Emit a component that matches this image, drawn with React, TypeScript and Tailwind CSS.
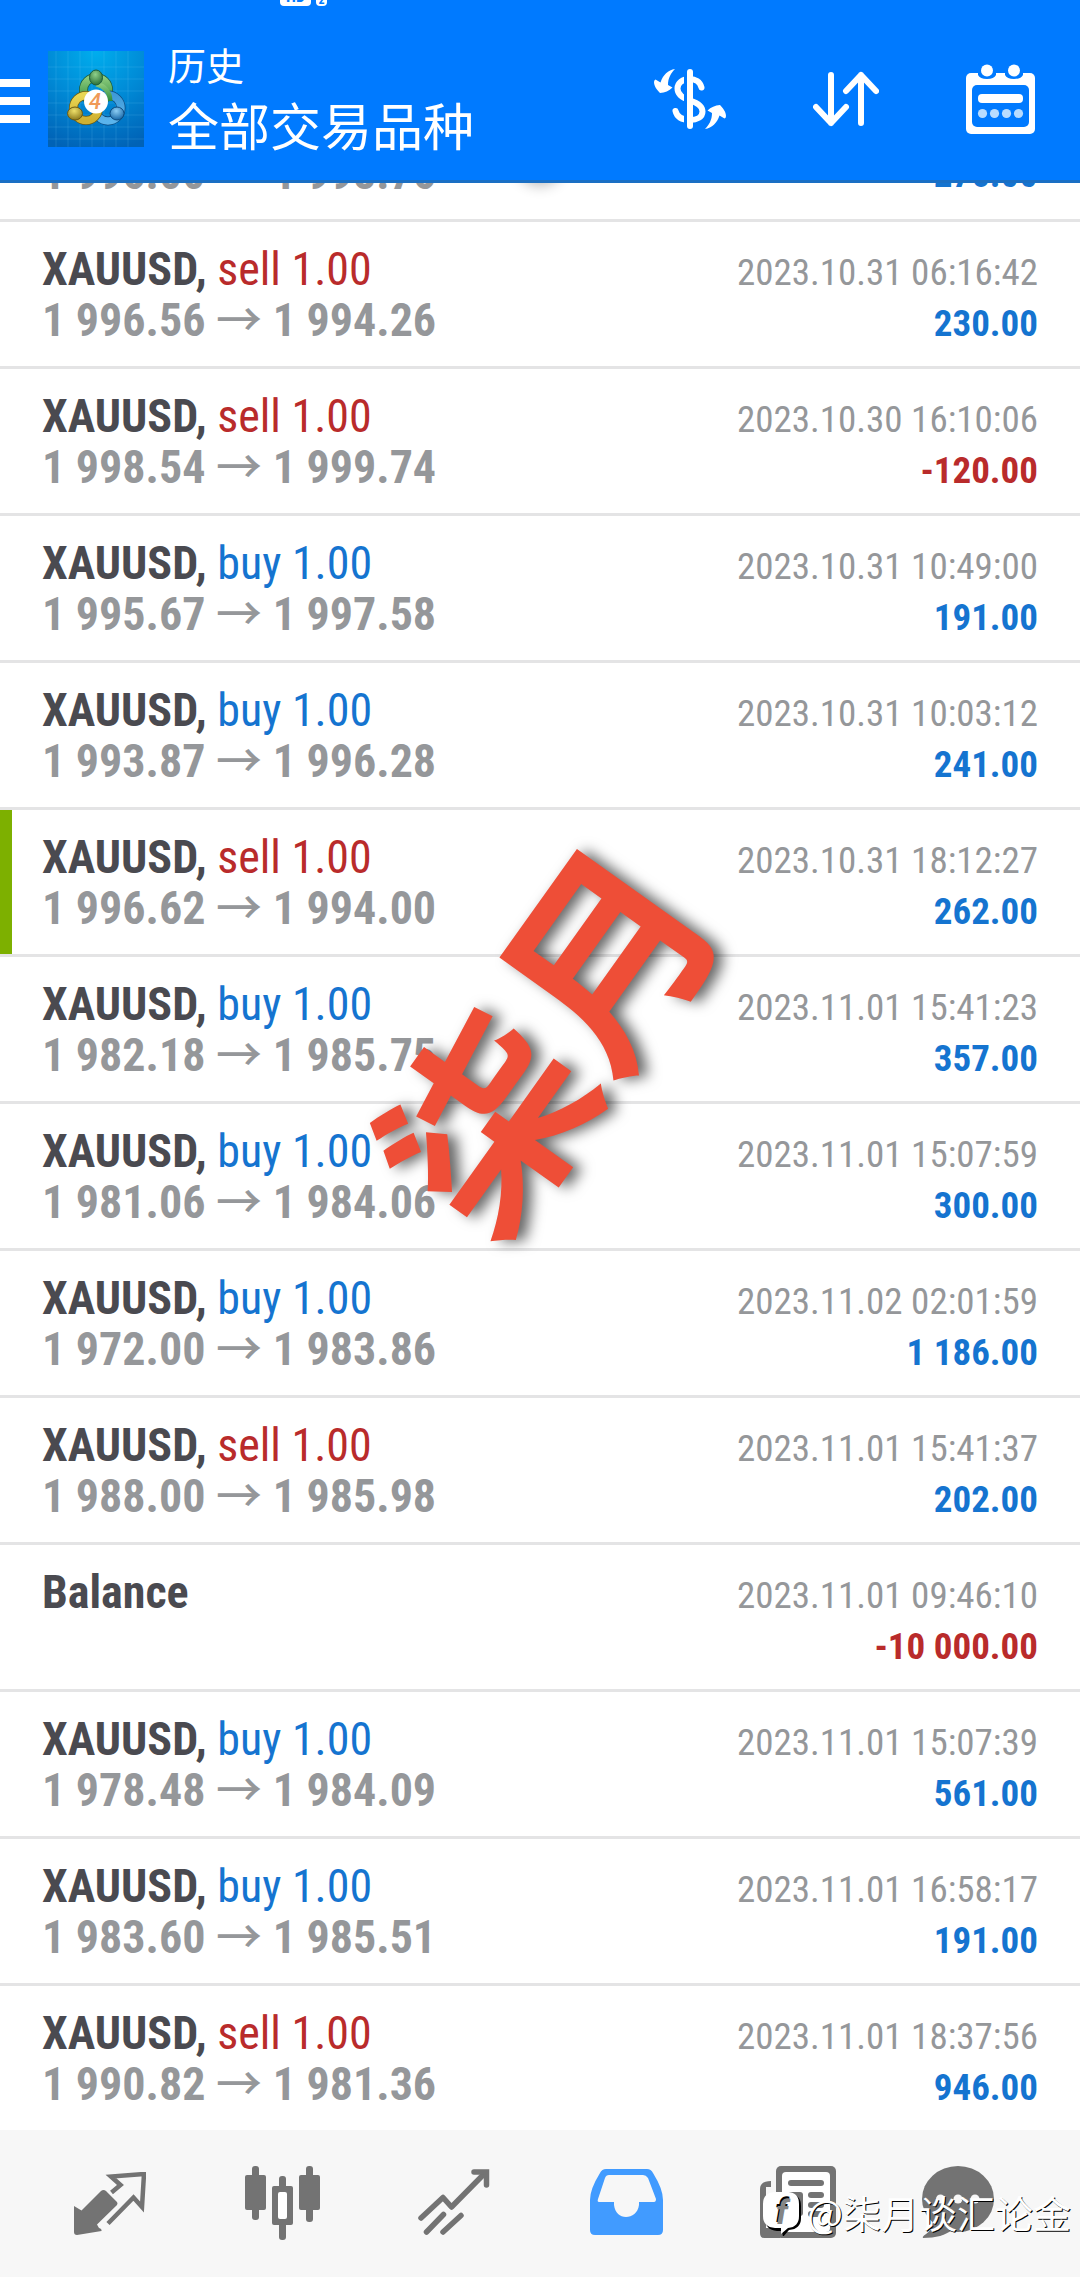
import React from "react";

type Deal = {
  side?: "buy" | "sell";
  open?: string;
  close?: string;
  time: string;
  profit: string;
  marked?: boolean;
};

const deals: Deal[] = [
  { side: "sell", open: "1 996.56", close: "1 994.26", time: "2023.10.31 06:16:42", profit: "230.00" },
  { side: "sell", open: "1 998.54", close: "1 999.74", time: "2023.10.30 16:10:06", profit: "-120.00" },
  { side: "buy", open: "1 995.67", close: "1 997.58", time: "2023.10.31 10:49:00", profit: "191.00" },
  { side: "buy", open: "1 993.87", close: "1 996.28", time: "2023.10.31 10:03:12", profit: "241.00" },
  { side: "sell", open: "1 996.62", close: "1 994.00", time: "2023.10.31 18:12:27", profit: "262.00", marked: true },
  { side: "buy", open: "1 982.18", close: "1 985.75", time: "2023.11.01 15:41:23", profit: "357.00" },
  { side: "buy", open: "1 981.06", close: "1 984.06", time: "2023.11.01 15:07:59", profit: "300.00" },
  { side: "buy", open: "1 972.00", close: "1 983.86", time: "2023.11.02 02:01:59", profit: "1 186.00" },
  { side: "sell", open: "1 988.00", close: "1 985.98", time: "2023.11.01 15:41:37", profit: "202.00" },
  { time: "2023.11.01 09:46:10", profit: "-10 000.00" },
  { side: "buy", open: "1 978.48", close: "1 984.09", time: "2023.11.01 15:07:39", profit: "561.00" },
  { side: "buy", open: "1 983.60", close: "1 985.51", time: "2023.11.01 16:58:17", profit: "191.00" },
  { side: "sell", open: "1 990.82", close: "1 981.36", time: "2023.11.01 18:37:56", profit: "946.00" },
];

function AppLogo() {
  return (
    <svg className="h-24 w-24 shrink-0" viewBox="0 0 96 96" aria-hidden="true">
      <defs>
        <radialGradient id="bg" cx="0.5" cy="0" r="1.05">
          <stop offset="0" stopColor="#00aeee" />
          <stop offset="0.5" stopColor="#008ad6" />
          <stop offset="1" stopColor="#0062b6" />
        </radialGradient>
        <linearGradient id="green" x1="0" y1="0" x2="0" y2="1">
          <stop offset="0" stopColor="#8ccb7c" />
          <stop offset="1" stopColor="#2c8a3c" />
        </linearGradient>
        <linearGradient id="yellow" x1="0" y1="0" x2="0" y2="1">
          <stop offset="0" stopColor="#e8d654" />
          <stop offset="1" stopColor="#d0b030" />
        </linearGradient>
        <linearGradient id="sky" x1="0" y1="0" x2="0" y2="1">
          <stop offset="0" stopColor="#3f9ad8" />
          <stop offset="1" stopColor="#5ab4ec" />
        </linearGradient>
        <radialGradient id="greenHead" cx="0.45" cy="0.3" r="0.7">
          <stop offset="0" stopColor="#8fd08a" />
          <stop offset="1" stopColor="#2b7038" />
        </radialGradient>
        <radialGradient id="yellowHead" cx="0.45" cy="0.3" r="0.7">
          <stop offset="0" stopColor="#eee06a" />
          <stop offset="1" stopColor="#8c7a1c" />
        </radialGradient>
        <radialGradient id="skyHead" cx="0.45" cy="0.3" r="0.7">
          <stop offset="0" stopColor="#8ccdf4" />
          <stop offset="1" stopColor="#1868a8" />
        </radialGradient>
      </defs>
      <rect width="96" height="96" fill="url(#bg)" />
      <path
        d="M8 0V96M20 0V96M32 0V96M44 0V96M56 0V96M68 0V96M80 0V96M0 16H96M0 28H96M0 40H96M0 52H96M0 64H96M0 76H96M0 88H96"
        stroke="#7fd4ff"
        strokeOpacity="0.16"
      />
      <circle cx="48" cy="39" r="12.500" fill="none" stroke="#1c5b3a" strokeWidth="9" />
      <circle cx="48" cy="39" r="12.500" fill="none" stroke="url(#green)" strokeWidth="7.500" />
      <circle cx="60" cy="57" r="13" fill="none" stroke="#0d4b80" strokeWidth="9" />
      <circle cx="60" cy="57" r="13" fill="none" stroke="url(#sky)" strokeWidth="7.500" />
      <circle cx="38" cy="57" r="12.500" fill="none" stroke="#6a5a14" strokeWidth="9" />
      <circle cx="38" cy="57" r="12.500" fill="none" stroke="url(#yellow)" strokeWidth="7.500" />
      <path d="M48 33C55 34 62 40 62 50" fill="none" stroke="url(#green)" strokeWidth="5" />
      <ellipse cx="48" cy="26.500" rx="6.500" ry="7.500" fill="url(#greenHead)" stroke="#1c5b3a" />
      <ellipse cx="27" cy="62.500" rx="7.500" ry="6.500" fill="url(#yellowHead)" stroke="#6a5a14" />
      <ellipse cx="69" cy="62.500" rx="7" ry="6.500" fill="url(#skyHead)" stroke="#0d4b80" />
      <circle cx="48" cy="50.500" r="12" fill="#fff" />
      <text x="47" y="58" textAnchor="middle" fontSize="22" fontWeight="500" fontStyle="italic" fill="#f09a58" fontFamily="Roboto, sans-serif">
        4
      </text>
    </svg>
  );
}

function Header() {
  return (
    <header className="relative z-10 h-[183px] shrink-0 border-b-3 border-[#1a6fc4] bg-[#007aff] text-white">
      {/* Status bar, mostly scrolled off */}
      <div className="flex h-[6px] items-end gap-[5px] overflow-hidden pl-[280px]" aria-hidden="true">
        <span className="flex h-[18px] w-[31px] shrink-0 items-end justify-center rounded-sm bg-white text-base leading-[18px] font-bold text-[#007aff]">HD</span>
        <span className="flex h-[18px] w-[11px] shrink-0 items-end justify-center rounded-sm bg-white text-xs leading-[12px] font-bold text-[#007aff]">2</span>
      </div>
      <div className="flex items-center pt-[30px] pr-11">
        <button type="button" aria-label="菜单" className="flex h-24 w-12 flex-col justify-center gap-[10px] pt-1">
          <span className="h-2 w-[30px] bg-white" />
          <span className="h-2 w-[30px] bg-white" />
          <span className="h-2 w-[30px] bg-white" />
        </button>
        <div className="mt-[15px] mb-auto">
          <AppLogo />
        </div>
        <div className="ml-6 flex-1 pb-[6px] font-['Noto_Sans_CJK_SC',sans-serif]">
          <p className="text-[38px] leading-[56px]">历史</p>
          <h1 className="text-[51px] leading-[64px]">全部交易品种</h1>
        </div>
        <button type="button" aria-label="货币">
          <svg className="h-[62px] w-[72px]" viewBox="0 0 72 62" fill="none">
            <path
              d="M47.500 19.500C46 13.500 41 11 36 11C28.500 11 23.500 15 23.500 20.500C23.500 27 28.500 30 36 32.500C44 35 48.500 38 48.500 43.500C48.500 49 43 52 36 52C28 52 23 49 21.500 43"
              stroke="#fff"
              strokeWidth="6"
              strokeLinecap="round"
            />
            <path d="M31.500 4V58" stroke="#007aff" strokeWidth="3" />
            <path d="M36 4V58" stroke="#fff" strokeWidth="6" strokeLinecap="round" />
            <path d="M21 1C14 2 9 7 6.500 14.500L1.500 11.500Q0 12 0 14C0 18 3 22 6 25C11 24.500 15 23 18.500 19.500L14 17C14 10 17 5 21 1Z" fill="#fff" />
            <path d="M51 61C58 60 63 55 65.500 47.500L70.500 50.500Q72 50 72 48C72 44 69 40 66 37C61 37.500 57 39 53.500 42.500L58 45C58 52 55 57 51 61Z" fill="#fff" />
          </svg>
        </button>
        <button type="button" aria-label="排序" className="ml-[87px]">
          <svg className="h-14 w-[66px]" viewBox="0 0 66 56" fill="none" stroke="#fff" strokeWidth="6" strokeLinecap="round" strokeLinejoin="round">
            <path d="M18 4V52M3 36L18 52L33 36M48 52V4M33 20L48 4L63 20" />
          </svg>
        </button>
        <button type="button" aria-label="日期" className="ml-[87px]">
          <svg className="h-[70px] w-[70px]" viewBox="0 0 70 70">
            <rect y="9" width="69" height="61" rx="5" fill="#fff" />
            <rect x="6" y="21" width="57" height="42" rx="5" fill="#007aff" />
            <path d="M12 9V11Q14 15 21 15Q28 15 30 11V9ZM39 9V11Q41 15 48 15Q55 15 57 11V9Z" fill="#007aff" />
            <circle cx="21" cy="6.500" r="6" fill="#fff" />
            <circle cx="48" cy="6.500" r="6" fill="#fff" />
            <rect x="12" y="30" width="45" height="9" rx="4" fill="#fff" />
            <g fill="#b8dcff">
              <circle cx="16.500" cy="49.500" r="4.600" />
              <circle cx="28.500" cy="49.500" r="4.600" />
              <circle cx="40.500" cy="49.500" r="4.600" />
              <circle cx="52.500" cy="49.500" r="4.600" />
            </g>
          </svg>
        </button>
      </div>
    </header>
  );
}

function Prices({ open, close }: { open: string; close: string }) {
  return (
    <p className="text-[46px] leading-[51px] font-bold text-[#95979a]">
      {open} <span className="font-['Noto_Sans_CJK_SC',sans-serif] leading-0 font-medium">→</span> {close}
    </p>
  );
}

function DealRow({ deal }: { deal: Deal }) {
  const sideColor = deal.side === "sell" ? "text-[#b92b2b]" : "text-[#1574d0]";
  const profitColor = deal.profit.startsWith("-") ? "text-[#b92b2b]" : "text-[#1574d0]";
  return (
    <li className="relative flex h-[147px] shrink-0 justify-between border-t-3 border-[#e4e4e5] px-[42px] pt-[22px] whitespace-nowrap">
      {deal.marked && <span className="absolute inset-y-0 left-0 w-3 bg-[#7db000]" />}
      <div>
        <p className="text-[46px] leading-[51px]">
          <span className="font-bold text-[#4a4a50]">{deal.side ? "XAUUSD," : "Balance"}</span>
          {deal.side && <span className={sideColor}> {deal.side} 1.00</span>}
        </p>
        {deal.open && deal.close && <Prices open={deal.open} close={deal.close} />}
      </div>
      <div className="pt-[3px] text-right text-[37px] leading-[51px]">
        <p className="text-[#95979a]">{deal.time}</p>
        <p className={`font-bold ${profitColor}`}>{deal.profit}</p>
      </div>
    </li>
  );
}

function BottomNav() {
  return (
    <nav className="relative z-10 flex h-[147px] shrink-0 items-start bg-[#f7f7f7] pr-12 pl-6 text-[#737373]">
      <button type="button" aria-label="行情" className="flex flex-7 justify-center pt-[42px]">
        <svg className="h-16 w-[72px]" viewBox="0 0 72 64">
          <path d="M0 34L7.500 38.500L27 19Q29.500 17 32 19L43 30Q44 31.500 43 33L23 52.500L25 56Q28 57 27.500 59L3 63Q0 63 0 60Z" fill="currentColor" />
          <path d="M37.500 20.500L46.500 13L37 4.500L70 2L68 35L59.500 25.500L34 51.500" fill="none" stroke="currentColor" strokeWidth="4.500" />
        </svg>
      </button>
      <button type="button" aria-label="图表" className="flex flex-7 justify-center pt-9">
        <svg className="h-[74px] w-[75px]" viewBox="0 0 75 74" fill="currentColor">
          <rect y="9" width="21" height="35" rx="2" />
          <rect x="7" width="7" height="54" rx="3" />
          <rect x="54" y="9" width="21" height="35" rx="2" />
          <rect x="61" width="7" height="56" rx="3" />
          <rect x="34" y="10" width="7" height="64" rx="3" />
          <rect x="27" y="20" width="21" height="39" rx="2" />
          <rect x="33" y="26" width="9" height="27" rx="2" fill="#fff" />
        </svg>
      </button>
      <button type="button" aria-label="交易" className="flex flex-7 justify-center pt-[39px]">
        <svg className="h-[66px] w-[72px]" viewBox="0 0 72 66" fill="none" stroke="currentColor" strokeWidth="5.500" strokeLinecap="round">
          <path d="M3 49L25 28.500L33.500 38L67 4" strokeLinejoin="round" />
          <path d="M56 3H68.500V16" />
          <path d="M8.500 63L25.500 45.500M25 63L43 46.500" />
        </svg>
      </button>
      <button type="button" aria-label="历史" className="flex flex-7 justify-center pt-[39px]">
        <svg className="h-[66px] w-[73px]" viewBox="0 0 73 66">
          <path d="M16 0H57Q61 0 63 4Q73 20 73 31V61Q73 66 68 66H5Q0 66 0 61V31Q0 20 10 4Q12 0 16 0Z" fill="#419bff" />
          <path d="M19 6H53Q56 6 58 9L66 30Q66 33 64 33H49V36C48 44 42 48 36 48C30 48 25 44 24 36V33H9Q7 33 8 30L15 9Q16 6 19 6Z" fill="#f7f7f7" />
        </svg>
      </button>
      <button type="button" aria-label="新闻" className="flex flex-7 justify-center pt-9">
        <svg className="h-[72px] w-[76px]" viewBox="0 0 76 72">
          <path d="M11 15V21H6V72H4Q0 72 0 67V23Q0 15 11 15Z" fill="currentColor" />
          <path d="M4 62H20V72H4Z" fill="currentColor" />
          <rect x="16" width="60" height="72" rx="5" fill="currentColor" />
          <rect x="22" y="6" width="48" height="60" rx="4" fill="#fff" />
          <rect x="28" y="14" width="36" height="6" rx="3" fill="currentColor" />
          <rect x="28" y="26" width="15" height="24" rx="3" fill="currentColor" />
          <rect x="48" y="26" width="16" height="6" rx="3" fill="currentColor" />
          <rect x="48" y="36" width="16" height="6" rx="3" fill="currentColor" />
          <rect x="48" y="45" width="16" height="6" rx="3" fill="currentColor" />
        </svg>
      </button>
      <button type="button" aria-label="消息" className="flex flex-6 justify-center pt-9">
        <svg className="h-[72px] w-[72px]" viewBox="0 0 72 72" fill="currentColor">
          <ellipse cx="36" cy="33" rx="36" ry="33" />
          <path d="M1 72C14 72 24 69 30 64L10 52C12 60 9 65 2 69.500Q0 71 1 72Z" />
          <g fill="#f7f7f7">
            <circle cx="18.500" cy="33" r="4.500" />
            <circle cx="36" cy="33" r="4.500" />
            <circle cx="53" cy="33" r="4.500" />
          </g>
        </svg>
      </button>
      <div className="absolute top-[54px] right-[9px] flex items-center gap-1 text-white">
        <svg className="h-12 w-[42px]" viewBox="0 0 42 48">
          <path d="M15 5H27Q39 5 39 17V29Q39 40 27 41L21 48L20 42H15Q3 41 3 29V17Q3 5 15 5Z" fill="#000" transform="translate(1 1)" />
          <path d="M15 4H26Q38 4 38 16V28Q38 39 27 40L20 46V40H14Q2 39 2 28V16Q2 4 15 4Z" fill="#fff" />
          <text x="14" y="34" fontSize="34" fontStyle="italic" fontWeight="700" fill="#000" fontFamily="Roboto, sans-serif">
            f
          </text>
          <text x="15" y="36" fontSize="34" fontStyle="italic" fontWeight="700" fill="#858585" fontFamily="Roboto, sans-serif" aria-hidden="true">
            f
          </text>
        </svg>
        <span className="font-['Noto_Sans_CJK_SC',sans-serif] text-[38px] leading-[56px] [text-shadow:1px_1px_0_#000]">@柒月谈汇论金</span>
      </div>
    </nav>
  );
}

export default function App() {
  return (
    <div className="relative flex h-screen flex-col overflow-hidden bg-white font-['Roboto_Condensed','Liberation_Sans_Narrow',sans-serif]">
      <Header />
      <main className="relative flex min-h-0 flex-1 flex-col justify-end overflow-hidden">
        <span className="absolute -top-12 left-1/2 h-12 w-12 -translate-x-1/2 rounded-full shadow-[0_2px_14px_rgba(0,0,0,0.3)]" />
        <ul className="flex flex-col">
          {/* Row scrolled under the header */}
          <li className="flex h-9 items-end justify-between px-[42px] pb-5 whitespace-nowrap">
            <Prices open="1 996.00" close="1 998.76" />
            <p className="text-[37px] leading-[48px] font-bold text-[#1574d0]">276.00</p>
          </li>
          {deals.map((deal) => (
            <DealRow key={deal.time} deal={deal} />
          ))}
        </ul>
        <div className="pointer-events-none absolute top-[849px] left-[538px] -translate-x-1/2 -translate-y-1/2 drop-shadow-[9px_1px_7px_rgba(0,0,0,0.6)]">
          <p className="-rotate-[54.5deg] font-['Noto_Sans_CJK_SC',sans-serif] text-[204px] leading-none font-bold whitespace-nowrap text-[#ee4e37]">柒月</p>
        </div>
      </main>
      <BottomNav />
    </div>
  );
}
